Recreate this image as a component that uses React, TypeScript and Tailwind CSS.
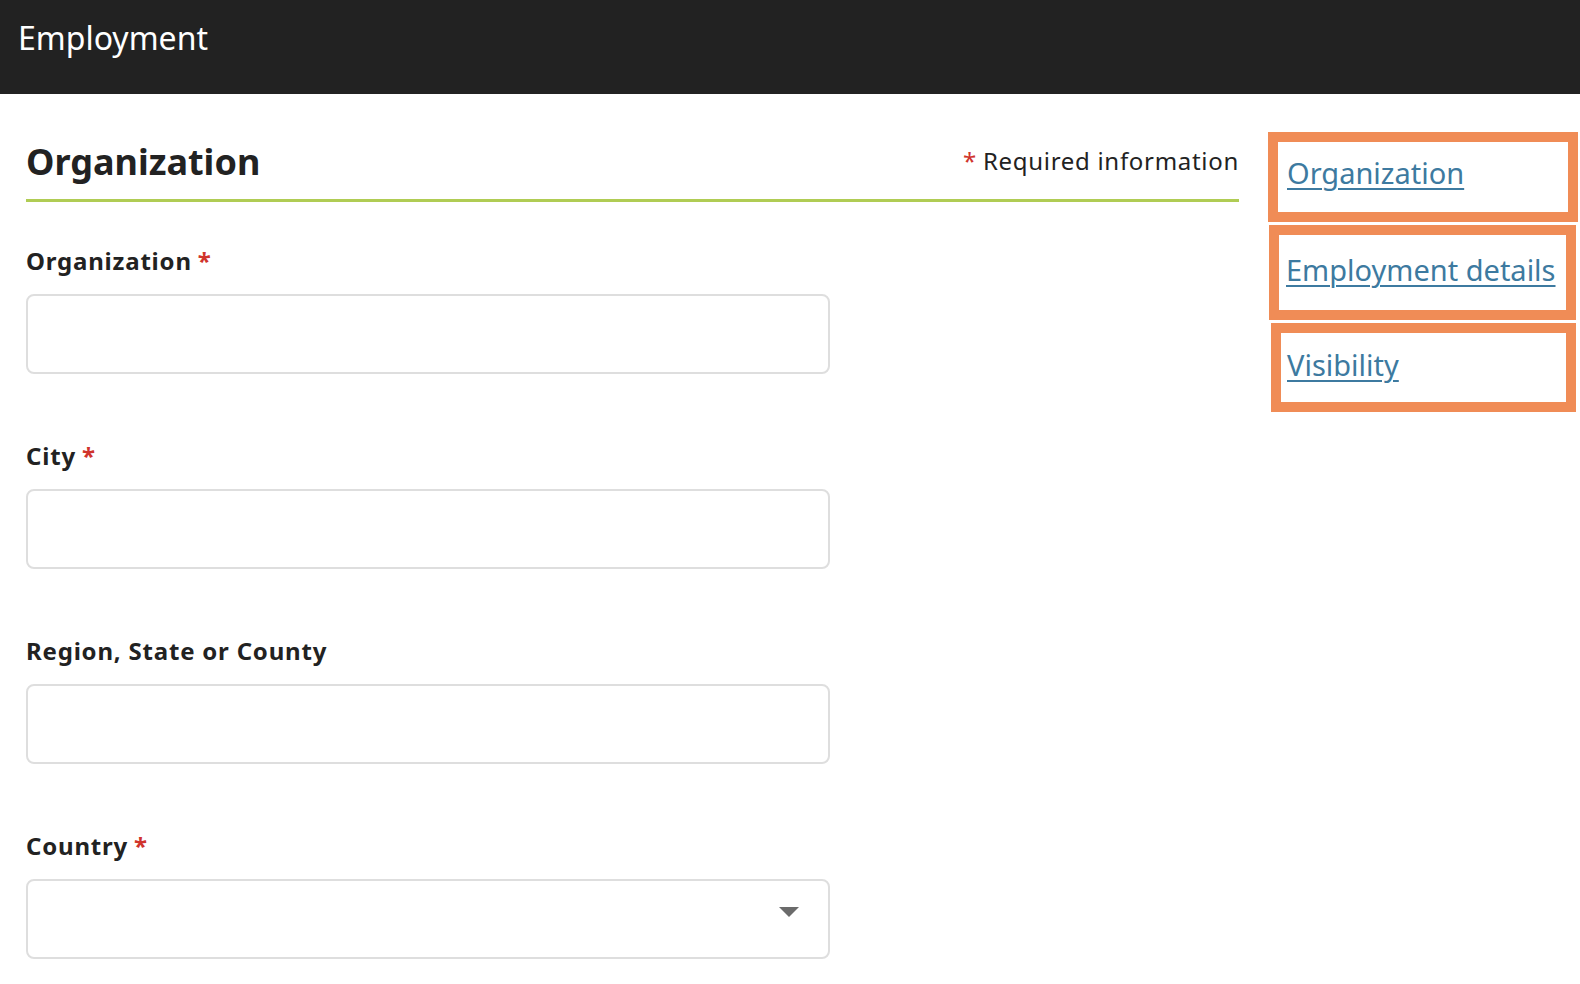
import React from "react";

const fields = [
  { label: "Organization", required: true, select: false },
  { label: "City", required: true, select: false },
  { label: "Region, State or County", required: false, select: false },
  { label: "Country", required: true, select: true },
];

const navItems = [
  { label: "Organization", box: "h-[90px] ml-0 mr-0 pt-[12px] pl-[9px]" },
  { label: "Employment details", box: "h-[95px] ml-[1px] mr-[2px] pt-[16px] pl-[7px]" },
  { label: "Visibility", box: "h-[89px] ml-[3px] mr-[2px] pt-[13px] pl-[6px]" },
];

const Field = ({ label, required, select }: { label: string; required: boolean; select: boolean }) => {
  return (
    <div className="flex flex-col">
      <label className="text-[24px] leading-[32px] font-bold tracking-[0.8px] text-[#222222] mb-[17px]">
        {label}
        {required && <span className="text-[#d0342c] ml-[6px]">*</span>}
      </label>
      <div className="relative w-[804px] h-[80px] border-2 border-[#dedede] rounded-[8px] bg-white">
        {select && (
          <svg
            className="absolute right-[29px] top-[26px]"
            width="20"
            height="10"
            viewBox="0 0 20 10"
          >
            <polygon points="0,0 20,0 10,10" fill="#6b6b6b" />
          </svg>
        )}
      </div>
    </div>
  );
};

const App = () => {
  return (
    <div className="min-h-screen bg-white" style={{ fontFamily: "'Noto Sans', 'Open Sans', sans-serif" }}>
      <header className="h-[94px] bg-[#222222] flex items-start px-[18px] pt-[16px]">
        <h1 className="text-white text-[32px] leading-[44px] font-normal">Employment</h1>
      </header>

      <div className="flex pl-[26px] pr-[2px] gap-[29px]">
        <main className="flex-1 pt-[46px]">
          <div className="flex justify-between items-start border-b-[3px] border-[#b0cc54] pb-[16px]">
            <h2 className="text-[36px] leading-[43px] font-bold text-[#222222]">Organization</h2>
            <span className="mt-[5px] text-[24px] leading-[32px] tracking-[0.7px] text-[#222222]">
              <span className="text-[#d0342c] mr-[6px]">*</span>
              Required information
            </span>
          </div>

          <div className="flex flex-col gap-[66px] pt-[43px]">
            {fields.map((f) => (
              <Field key={f.label} {...f} />
            ))}
          </div>
        </main>

        <nav className="w-[310px] pt-[38px] flex flex-col gap-[3px]">
          {navItems.map((n) => (
            <div key={n.label} className={`border-[10px] border-[#f08c56] bg-white ${n.box}`}>
              <a href="#" className="text-[29px] leading-[38px] text-[#3d7aa0] underline underline-offset-[4px] decoration-[2px] whitespace-nowrap">
                {n.label}
              </a>
            </div>
          ))}
        </nav>
      </div>
    </div>
  );
};

export default App;
